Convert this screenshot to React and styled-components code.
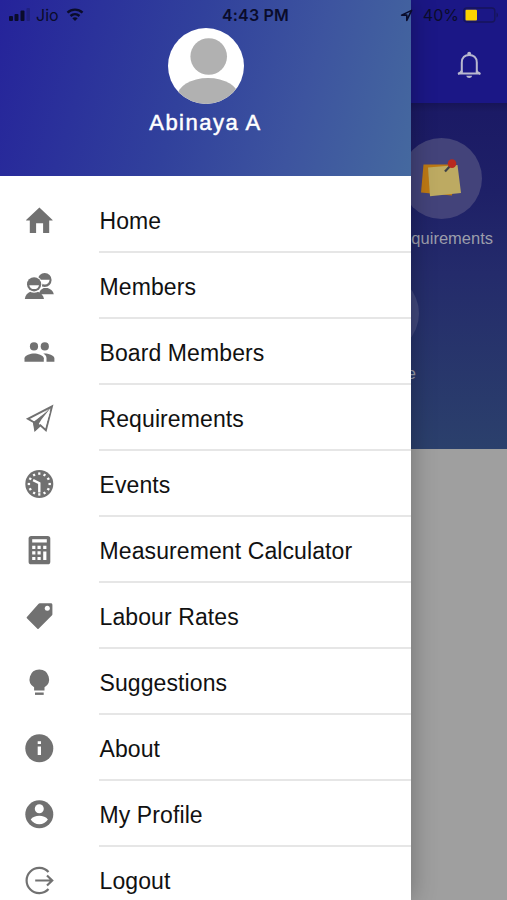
import React from "react"
import styled, { createGlobalStyle } from "styled-components"

const GlobalStyle = createGlobalStyle`
  * {
    box-sizing: border-box;
  }
  body {
    margin: 0;
    font-family: "Liberation Sans", Arial, sans-serif;
  }
`

const CLOCK_TICKS = [0, 30, 60, 90, 120, 150, 180, 210, 240, 270, 300, 330]

const ICONS = {
  home: <path d="M16.4 3.6 29.6 16v.6h-3.400V29h-6.100V19.300h-7V29H6.800V16.600H3.100V16z" />,
  members: (
    <>
      <path d="M16 24.200c.5-3.600 2.500-5.200 4.700-6.200h4c3 1 5.500 2.700 6.100 6.200z" />
      <circle cx="21.700" cy="10" r="8" fill="#fff" />
      <circle cx="21.700" cy="10" r="6.900" />
      <path d="M17 9.800h9.600c-.3 3.200-2.200 4.700-4.800 4.700s-4.500-1.500-4.800-4.700z" fill="#fff" />
      <circle cx="11.100" cy="14.300" r="8.200" fill="#fff" />
      <path d="M1.800 29c.4-4 2.700-6.200 6-7.600h6.600c3.600 1.400 6.100 3.800 6.600 7.600z" />
      <circle cx="11.100" cy="14.900" r="7.800" fill="#fff" />
      <circle cx="11.100" cy="14.300" r="7.100" />
      <path d="M6.300 15.200h9.700c-.5 2.700-2.300 3.900-4.800 3.900s-4.500-1.200-4.900-3.900z" fill="#fff" />
    </>
  ),
  board: (
    <>
      <circle cx="11" cy="10.400" r="4.100" />
      <circle cx="21.800" cy="10.400" r="4.100" />
      <path d="M1.500 25.700v-3.400c0-3.200 6.300-4.900 9.600-4.900s9.700 1.700 9.700 4.900v3.400z" />
      <path d="M20.300 17.500c.5-.1 1-.1 1.500-.1 3.200 0 9.600 1.700 9.600 4.900v3.400h-7.900v-3.400c0-2-1.200-3.600-3.200-4.800z" />
    </>
  ),
  plane: (
    <>
      <path
        d="M29 4.300 4.900 16.900l5.900 3.300 1.300 8 5.300-4.900 5.500 4.900z"
        fill="none"
        stroke="currentColor"
        strokeWidth="1.900"
      />
      <path d="M29 4.300 10 20l2 9 5.400-5.400-1.600-1.800 2.800-4.600z" />
      <path d="M27 7 11.300 19.200l-2.500-1.600z" fill="#fff" />
      <path d="M27.300 8.500 17.800 21.600l4.300 4z" fill="#fff" />
    </>
  ),
  clock: (
    <>
      <circle cx="16.300" cy="16" r="14" />
      {CLOCK_TICKS.map(angle => (
        <rect
          key={angle}
          x="15.200"
          y="4.400"
          width="2.200"
          height="2.400"
          fill="#fff"
          transform={`rotate(${angle} 16.300 16)`}
        />
      ))}
      <path d="m10.100 12.200 6.200 3v9.200" fill="none" stroke="#fff" strokeWidth="2.400" />
    </>
  ),
  calculator: (
    <>
      <rect x="5.600" y="2" width="21.700" height="28.300" rx="2.600" />
      <g fill="#fff">
        <path d="M9.200 5.200h14.600v3.300H9.200z" />
        <path d="M9.200 11.800h3.200V15H9.200zM14.500 11.800h3.200V15h-3.200zM20.200 11.800h3.200V15h-3.200z" />
        <path d="M9.200 17.300h3.200v3.200H9.200zM14.500 17.300h3.200v3.200h-3.200z" />
        <path d="M9.200 22.900h3.200v3.200H9.200zM14.500 22.900h3.200v3.200h-3.200zM20.200 17.600h3.200v8.500h-3.200z" />
      </g>
    </>
  ),
  tag: (
    <>
      <path d="M16.800 3.300h11c1 0 1.600.6 1.600 1.600v9.300c0 .6-.2 1-.6 1.400L15.600 28.700c-.4.4-.8.4-1.200 0L3.900 18.200c-.4-.4-.4-.8 0-1.200L15.400 4c.4-.5.8-.7 1.400-.7z" />
      <circle cx="24.300" cy="8.300" r="2.500" fill="#fff" />
    </>
  ),
  bulb: (
    <>
      <path d="M16.300 3.400a9.700 9.700 0 0 0-5.200 17.900v3.100h10.400v-3.100a9.700 9.700 0 0 0-5.200-17.900z" />
      <path d="M12 26.500h8.700v2.400H12z" />
    </>
  ),
  info: (
    <>
      <circle cx="16.300" cy="16.300" r="14" />
      <path d="M14.700 9.200h3.300v2.900h-3.300zM14.700 14.500h3.300v8.600h-3.300z" fill="#fff" />
    </>
  ),
  profile: (
    <>
      <circle cx="16.300" cy="16.300" r="14" />
      <circle cx="16.300" cy="10.800" r="4.500" fill="#fff" />
      <path d="M7.700 21.500c1.700-2.600 5.200-3.800 8.600-3.800s6.900 1.200 8.600 3.800c-2 3-5.100 4.800-8.600 4.800s-6.600-1.800-8.600-4.800z" fill="#fff" />
    </>
  ),
  logout: (
    <path
      d="M25.500 8A12.600 12.600 0 1 0 25.500 25M12.200 16.500h17M24 11.500l5.200 5-5.200 5"
      fill="none"
      stroke="currentColor"
      strokeWidth="2.200"
    />
  ),
}

const MENU = [
  { title: "Home", icon: "home" },
  { title: "Members", icon: "members" },
  { title: "Board Members", icon: "board" },
  { title: "Requirements", icon: "plane" },
  { title: "Events", icon: "clock" },
  { title: "Measurement Calculator", icon: "calculator" },
  { title: "Labour Rates", icon: "tag" },
  { title: "Suggestions", icon: "bulb" },
  { title: "About", icon: "info" },
  { title: "My Profile", icon: "profile" },
  { title: "Logout", icon: "logout" },
]

const Screen = styled.div`
  position: relative;
  width: 507px;
  height: 900px;
  overflow: hidden;
  background-color: #9f9f9f;
`

const TopBar = styled.div`
  height: 103px;
  padding: 51px 24px 0 0;
  display: flex;
  justify-content: flex-end;
  background-color: #1b1786;
  color: #b9b9cf;
`

const Dashboard = styled.div`
  height: 346px;
  padding-top: 35px;
  display: flex;
  flex-direction: column;
  gap: 21px;
  background: linear-gradient(
    #171557 0,
    #1b1a65 9px,
    #1e2067 90px,
    #242b6b 170px,
    #2b406c 346px
  );
`

const TileRow = styled.div`
  display: flex;
  justify-content: flex-end;
  padding-right: ${props => props.$inset}px;
`

const Tile = styled.div`
  width: 104px;
  height: 114px;
  display: flex;
  flex-direction: column;
  align-items: center;
  gap: 9px;
`

const TileCircle = styled.div`
  width: 81px;
  height: 81px;
  flex: none;
  display: flex;
  align-items: center;
  justify-content: center;
  border-radius: 50%;
  background-color: ${props => props.$color};
`

const TileLabel = styled.div`
  width: ${props => props.$width}px;
  text-align: right;
  white-space: nowrap;
  font-size: 16.5px;
  line-height: 20px;
  color: #9b9dab;
`

const Drawer = styled.div`
  position: absolute;
  top: 0;
  left: 0;
  width: 411px;
  height: 900px;
  overflow: visible;
  background-color: #fff;
  box-shadow: 0 0 24px rgba(0, 0, 0, 0.3);
`

const Profile = styled.div`
  height: 176px;
  padding-top: 28px;
  display: flex;
  flex-direction: column;
  align-items: center;
  background: linear-gradient(106deg, #25239a 0%, #31419c 45%, #3d549f 72%, #45699f 100%);
`

const Name = styled.div`
  margin-top: 6px;
  font-size: 22px;
  line-height: 26px;
  letter-spacing: 1.5px;
  color: #fff;
  -webkit-text-stroke: 0.5px #fff;
`

const Menu = styled.div`
  height: 724px;
  padding-top: 11px;
  overflow: hidden;
`

const Item = styled.div`
  height: 66px;
  padding-left: 23px;
  display: flex;
  align-items: center;
  gap: 44px;
  svg {
    flex: none;
    color: #717171;
  }
`

const ItemText = styled.div`
  flex: 1;
  height: 66px;
  padding-left: 0.5px;
  line-height: 68px;
  border-bottom: 2px solid #e6e6e6;
  font-size: 23px;
  letter-spacing: 0.1px;
  white-space: nowrap;
  color: #111;
`

const StatusBar = styled.div`
  position: absolute;
  top: 0;
  left: 0;
  width: 507px;
  height: 30px;
  padding: 0 8px;
  display: grid;
  grid-template-columns: 1fr auto 1fr;
  align-items: center;
  font-family: Inter, sans-serif;
  font-size: 16px;
  color: #0a0c2b;
`

const StatusGroup = styled.div`
  display: flex;
  align-items: center;
  justify-content: ${props => (props.$end ? "flex-end" : "flex-start")};
  gap: ${props => props.$gap}px;
`

const Time = styled.div`
  font-weight: 600;
  letter-spacing: 0.2px;
  margin-left: 4px;
`

const Battery = styled.span`
  margin-left: 6px;
`

const Status = () => (
  <StatusBar>
    <StatusGroup $gap={6}>
      <svg width="22" height="14" viewBox="0 0 22 14" fill="currentColor">
        <rect x="1" y="8" width="4" height="5" rx="1" />
        <rect x="6.500" y="6" width="4" height="7" rx="1" />
        <rect x="12.500" y="2.500" width="4" height="10.500" rx="1" />
        <rect x="18.500" y="0" width="3.500" height="13" rx="1" opacity="0.250" />
      </svg>
      <span>Jio</span>
      <svg width="20" height="14" viewBox="-1 0 20 14" fill="none" stroke="currentColor" strokeWidth="2.400">
        <path d="M1.500 4.600C5.800.6 12.200.6 16.500 4.600" />
        <path d="M4.500 8c2.600-2.400 6.400-2.400 9 0" />
        <path d="M9 13 6.300 10.300c1.600-1.400 3.800-1.400 5.400 0z" fill="currentColor" stroke="none" />
      </svg>
    </StatusGroup>
    <Time>4:43 PM</Time>
    <StatusGroup $end $gap={4}>
      <svg width="13" height="13" viewBox="0 0 13 13" fill="none" stroke="currentColor" strokeWidth="1.600">
        <path d="M11.600 1.400 1.600 6.100h5.200v5.300z" strokeLinejoin="round" />
      </svg>
      <Battery>40%</Battery>
      <svg width="36" height="16" viewBox="0 0 36 16">
        <rect x=".8" y="1" width="31" height="14" rx="3" fill="none" stroke="#17155b" strokeWidth="1.400" />
        <rect x="2.500" y="2.700" width="11.500" height="10.800" rx="1" fill="#fbd200" />
        <path d="M33.500 5.500c2 .8 2 4.200 0 5z" fill="#17155b" />
      </svg>
    </StatusGroup>
  </StatusBar>
)

const App = () => {
  return (
    <Screen>
      <GlobalStyle />
      <TopBar>
        <svg width="28" height="28" viewBox="0 0 28 28" fill="none" stroke="currentColor" strokeWidth="2">
          <path d="M3.500 22.600h21.500M6.800 22.500V11.500c0-5 3.200-7.600 7.400-7.600s7.600 2.600 7.600 7.600v11" />
          <path d="M3 23c1.800-.8 3.200-1.800 3.900-3.400M25.500 23c-1.800-.8-3.300-1.800-4-3.400" />
          <circle cx="14.200" cy="2.600" r="1.900" fill="currentColor" stroke="none" />
          <path d="M11.300 24.800h5.800c-.6 3-5.200 3-5.800 0z" fill="currentColor" stroke="none" />
        </svg>
      </TopBar>
      <Dashboard>
        <TileRow $inset={14}>
          <Tile>
            <TileCircle $color="#43437a">
              <svg width="42" height="40" viewBox="0 -3 42 40">
                <path d="M3.500 2.500h31L32 33.500 1 30.500z" fill="#bd7914" />
                <path d="M8 5.500 37.500 3l3.500 28L10 34.300z" fill="#bdaa62" />
                <path d="m25 9.500 6-6.500" stroke="#3d4147" strokeWidth="2.200" />
                <circle cx="32" cy="1.600" r="4.300" fill="#b7291f" />
              </svg>
            </TileCircle>
            <TileLabel $width={104}>Requirements</TileLabel>
          </Tile>
        </TileRow>
        <TileRow $inset={77}>
          <Tile>
            <TileCircle $color="#40477c" />
            <TileLabel $width={76}>e</TileLabel>
          </Tile>
        </TileRow>
      </Dashboard>
      <Drawer>
        <Profile>
          <svg width="76" height="76" viewBox="0 0 76 76">
            <clipPath id="avatar">
              <circle cx="38" cy="38" r="38" />
            </clipPath>
            <g clipPath="url(#avatar)">
              <path d="M0 0h76v76H0z" fill="#fff" />
              <circle cx="40.700" cy="28.500" r="18.300" fill="#b1b1b1" />
              <ellipse cx="40" cy="69" rx="31" ry="19" fill="#b1b1b1" />
            </g>
          </svg>
          <Name>Abinaya A</Name>
        </Profile>
        <Menu>
          {MENU.map(item => (
            <Item key={item.title}>
              <svg width="32" height="32" viewBox="0 0 32 32" fill="currentColor">
                {ICONS[item.icon]}
              </svg>
              <ItemText>{item.title}</ItemText>
            </Item>
          ))}
        </Menu>
      </Drawer>
      <Status />
    </Screen>
  )
}

export default App
